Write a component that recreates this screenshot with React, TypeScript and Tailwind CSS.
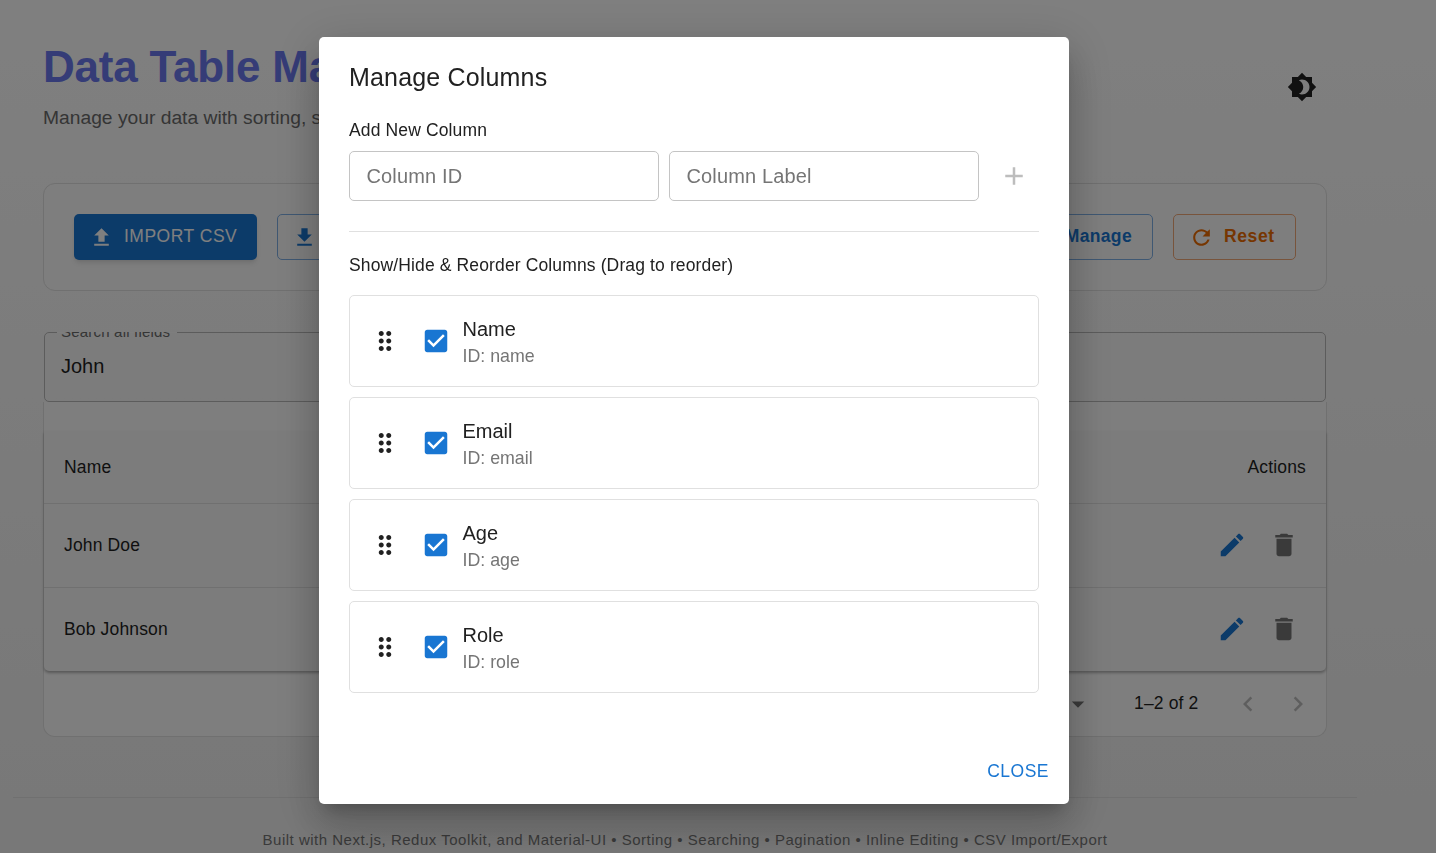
import React from 'react';

const Icon = ({ d, className }: { d: string; className?: string }) => (
  <svg viewBox="0 0 24 24" fill="currentColor" className={className}>
    <path d={d} />
  </svg>
);

const icons = {
  theme: 'M20 8.69V4h-4.69L12 .69 8.69 4H4v4.69L.69 12 4 15.31V20h4.69L12 23.31 15.31 20H20v-4.69L23.31 12 20 8.69zM12 18c-.89 0-1.74-.2-2.5-.55C11.56 16.5 13 14.42 13 12s-1.44-4.5-3.5-5.45C10.26 6.2 11.11 6 12 6c3.31 0 6 2.69 6 6s-2.69 6-6 6z',
  upload: 'M9 16h6v-6h4l-7-7-7 7h4zm-4 2h14v2H5z',
  download: 'M19 9h-4V3H9v6H5l7 7 7-7zM5 18v2h14v-2H5z',
  refresh: 'M17.65 6.35C16.2 4.9 14.21 4 12 4c-4.42 0-7.99 3.58-7.99 8s3.57 8 7.99 8c3.73 0 6.84-2.55 7.73-6h-2.08c-.82 2.33-3.04 4-5.65 4-3.31 0-6-2.69-6-6s2.69-6 6-6c1.66 0 3.14.69 4.22 1.78L13 11h7V4l-2.35 2.35z',
  edit: 'M3 17.25V21h3.75L17.81 9.94l-3.75-3.75L3 17.25zM20.71 7.04c.39-.39.39-1.02 0-1.41l-2.34-2.34c-.39-.39-1.02-.39-1.41 0l-1.83 1.83 3.75 3.75 1.83-1.83z',
  trash: 'M6 19c0 1.1.9 2 2 2h8c1.1 0 2-.9 2-2V7H6v12zM19 4h-3.5l-1-1h-5l-1 1H5v2h14V4z',
  drag: 'M11 18c0 1.1-.9 2-2 2s-2-.9-2-2 .9-2 2-2 2 .9 2 2zm-2-8c-1.1 0-2 .9-2 2s.9 2 2 2 2-.9 2-2-.9-2-2-2zm0-6c-1.1 0-2 .9-2 2s.9 2 2 2 2-.9 2-2-.9-2-2-2zm6 4c1.1 0 2-.9 2-2s-.9-2-2-2-2 .9-2 2 .9 2 2 2zm0 2c-1.1 0-2 .9-2 2s.9 2 2 2 2-.9 2-2-.9-2-2-2zm0 6c-1.1 0-2 .9-2 2s.9 2 2 2 2-.9 2-2-.9-2-2-2z',
  checkbox: 'M19 3H5c-1.11 0-2 .9-2 2v14c0 1.1.89 2 2 2h14c1.11 0 2-.9 2-2V5c0-1.1-.89-2-2-2zm-9 14l-5-5 1.41-1.41L10 14.17l7.59-7.59L19 8l-9 9z',
  add: 'M19 13h-6v6h-2v-6H5v-2h6V5h2v6h6v2z',
  left: 'M15.41 7.41L14 6l-6 6 6 6 1.41-1.41L10.83 12z',
  right: 'M10 6L8.59 7.41 13.17 12l-4.58 4.59L10 18l6-6z',
  drop: 'M7 10l5 5 5-5z',
};

const columns = [
  { label: 'Name', id: 'name' },
  { label: 'Email', id: 'email' },
  { label: 'Age', id: 'age' },
  { label: 'Role', id: 'role' },
];

function TableRow({ name }: { name: string }) {
  return (
    <div className="h-[84px] flex items-center pl-5 pr-[17px] border-t border-[#e0e0e0] text-[17.5px] tracking-[0.15px] text-[#1f1f1f]">
      <span>{name}</span>
      <div className="ml-auto -mt-[2px] flex items-center">
        <span className="p-2.5 text-[#1976d2]"><Icon d={icons.edit} className="w-[30px] h-[30px]" /></span>
        <span className="ml-0.5 p-2.5 text-[#757575]"><Icon d={icons.trash} className="w-[30px] h-[30px]" /></span>
      </div>
    </div>
  );
}

function Page() {
  return (
    <div className="w-[1436px] h-[853px] overflow-hidden bg-gradient-to-b from-white to-[#f0f0f0]">
      <div className="w-[1344px] ml-[13px]">
        <div className="px-[30px]">
          <header className="h-[183px] pt-[40px] flex justify-between">
            <div>
              <h1 className="text-[44px] leading-[54px] font-bold tracking-[-0.2px] text-[#6a78ee]">Data Table Manager</h1>
              <p className="mt-[9px] text-[19.25px] leading-[30px] text-[#6b6b6b]">Manage your data with sorting, searching and editing</p>
            </div>
            <span className="mr-[10px] mt-[32px] text-[#222]"><Icon d={icons.theme} className="w-[30px] h-[30px]" /></span>
          </header>

          <section className="h-[108px] rounded-xl border border-[#e0e0e0] bg-[#fdfdfd] px-[30px] flex items-center gap-5">
            <button className="w-[183px] h-[46px] rounded-[5px] bg-[#1976d2] text-white text-[17.5px] tracking-[0.5px] flex items-center gap-[10px] pl-[15px] shadow-md">
              <Icon d={icons.upload} className="w-[25px] h-[25px]" />
              <span className="-mt-[2px]">IMPORT CSV</span>
            </button>
            <button className="w-[183px] h-[46px] rounded-[5px] border border-[#7fb0e6] text-[#1976d2] text-[17.5px] tracking-[0.5px] flex items-center gap-[10px] pl-[14px]">
              <Icon d={icons.download} className="w-[25px] h-[25px]" />
              <span className="-mt-[2px]">EXPORT CSV</span>
            </button>
            <button className="ml-auto w-[150px] h-[46px] rounded-[5px] border border-[#7fb0e6] text-[#1976d2] text-[17.5px] tracking-[0.35px] font-bold flex items-center justify-end pr-[20px]">
              <span className="-mt-[2px]">Manage</span>
            </button>
            <button className="w-[123px] h-[46px] rounded-[5px] border border-[#f0a878] text-[#ed6c02] text-[17.5px] tracking-[0.6px] font-bold flex items-center gap-[10px] pl-[15px] shrink-0">
              <Icon d={icons.refresh} className="w-[25px] h-[25px]" />
              <span className="-mt-[2px]">Reset</span>
            </button>
          </section>

          <section className="mt-[41px] relative">
            <div className="h-[70px] mx-px rounded-[5px] border border-[#b8b8b8] flex items-center pl-[16px] pb-[2px] text-[20px] text-[#1f1f1f]">
              John
            </div>
            <div className="absolute left-[14px] top-0 h-px w-[120px] bg-[#fcfcfc]" />
            <div className="absolute left-[18px] top-0 h-[8px] overflow-hidden">
              <span className="block -mt-[9px] text-[15px] leading-[18px] tracking-[0.2px] text-[#6b6b6b]">Search all fields</span>
            </div>
          </section>

          <section className="h-[335px] pt-[29px] border-x border-b border-[#e0e0e0] rounded-b-xl bg-[#fdfdfd]">
            <div className="bg-[#f8f8f8] rounded-b-[5px] shadow-[0_2px_3px_rgba(0,0,0,0.3)]">
              <div className="h-[72px] flex items-center justify-between px-5 text-[17.5px] tracking-[0.15px] text-[#1f1f1f]">
                <span>Name</span>
                <span>Actions</span>
              </div>
              <TableRow name="John Doe" />
              <TableRow name="Bob Johnson" />
            </div>
            <div className="h-[65px] flex items-center text-[17.5px] tracking-[0.15px] text-[#1f1f1f]">
              <Icon d={icons.drop} className="w-[30px] h-[30px] ml-[1019px] text-[#757575]" />
              <span className="ml-[41px]">1–2 of 2</span>
              <Icon d={icons.left} className="w-[30px] h-[30px] ml-[35px] text-[#bdbdbd]" />
              <Icon d={icons.right} className="w-[30px] h-[30px] ml-5 text-[#bdbdbd]" />
            </div>
          </section>
        </div>

        <footer className="mt-[60px] border-t border-[#e0e0e0] pt-[32px] text-center text-[15px] leading-[20px] tracking-[0.5px] text-[#757575]">
          Built with Next.js, Redux Toolkit, and Material-UI • Sorting • Searching • Pagination • Inline Editing • CSV Import/Export
        </footer>
      </div>
    </div>
  );
}

function ManageColumnsDialog() {
  return (
    <div className="fixed inset-0 bg-black/50">
      <div className="ml-[319px] mt-[37px] w-[750px] h-[767px] bg-white rounded-[5px] shadow-[0_11px_15px_-7px_rgba(0,0,0,0.2),0_24px_38px_3px_rgba(0,0,0,0.14),0_9px_46px_8px_rgba(0,0,0,0.12)] flex flex-col">
        <h2 className="px-[30px] pt-[25px] text-[25px] leading-[30px] tracking-[0.17px] text-[#212121]">Manage Columns</h2>
        <div className="px-[30px] flex-1">
          <p className="mt-[26px] text-[17.5px] leading-[24px] tracking-[0.13px] text-[#212121]">Add New Column</p>
          <div className="mt-[9px] flex items-center gap-[10px] text-[20px] tracking-[0.15px] text-[#757575]">
            <div className="w-[310px] h-[50px] rounded-[5px] border border-[#c4c4c4] flex items-center pl-[16.5px]">Column ID</div>
            <div className="w-[310px] h-[50px] rounded-[5px] border border-[#c4c4c4] flex items-center pl-[16.5px]">Column Label</div>
            <span className="p-2.5 text-[#bdbdbd]"><Icon d={icons.add} className="w-[30px] h-[30px]" /></span>
          </div>
          <div className="mt-[30px] border-t border-[#e0e0e0]" />
          <p className="mt-[21px] text-[17.5px] leading-[24px] tracking-[0.13px] text-[#212121]">Show/Hide &amp; Reorder Columns (Drag to reorder)</p>
          <div className="mt-[18px] flex flex-col gap-[10px]">
            {columns.map((col) => (
              <div key={col.id} className="h-[92px] rounded-[5px] border border-[#e0e0e0] flex items-center pl-[20px]">
                <Icon d={icons.drag} className="w-[30px] h-[30px] text-[#212121]" />
                <Icon d={icons.checkbox} className="w-[30px] h-[30px] ml-[21px] text-[#1976d2]" />
                <div className="ml-[11.5px] pt-[2px]">
                  <div className="text-[20px] leading-[28px] text-[#212121]">{col.label}</div>
                  <div className="text-[17.8px] leading-[26px] text-[#757575]">ID: {col.id}</div>
                </div>
              </div>
            ))}
          </div>
        </div>
        <div className="flex justify-end pr-[20px] pb-[21px]">
          <button className="text-[17.5px] leading-[24px] tracking-[0.5px] text-[#1976d2]">CLOSE</button>
        </div>
      </div>
    </div>
  );
}

export default function App() {
  return (
    <div className="font-['Liberation_Sans',Arial,sans-serif]">
      <Page />
      <ManageColumnsDialog />
    </div>
  );
}
